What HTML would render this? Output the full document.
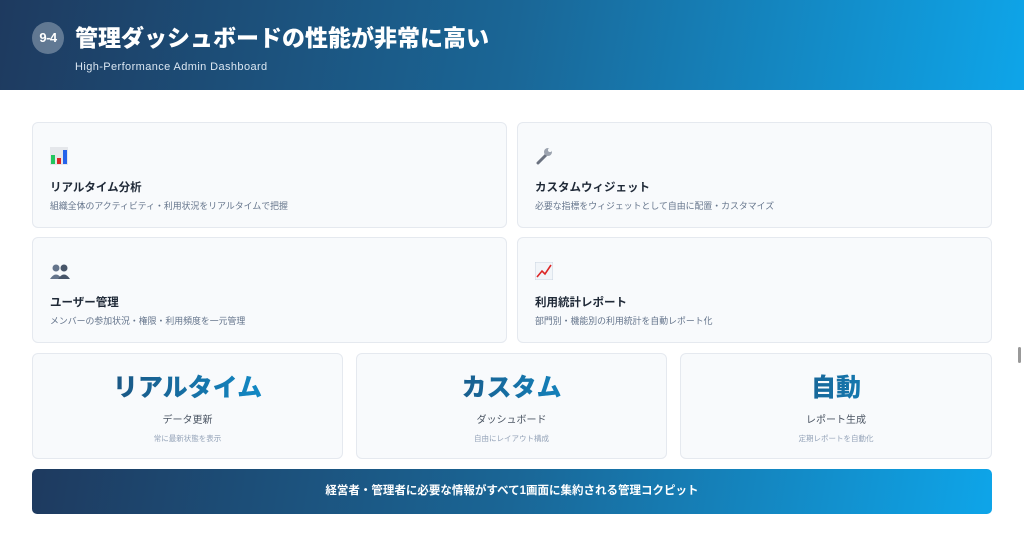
<!DOCTYPE html>
<html><head><meta charset="utf-8"><style>
*{margin:0;padding:0;box-sizing:border-box}
body{width:1024px;height:537px;overflow:hidden;background:#fff;font-family:"Liberation Sans","Noto Sans CJK JP",sans-serif;position:relative}
.hd{position:absolute;left:0;top:0;width:1024px;height:90px;background:linear-gradient(100deg,#1e3a5f 0%,#1a6696 50%,#0ea5e9 100%)}
.badge{position:absolute;left:32px;top:22px;width:32px;height:32px;border-radius:50%;background:rgba(255,255,255,.3);color:#fff;font-weight:700;font-size:13px;line-height:32px;text-align:center;letter-spacing:-.5px}
.title{position:absolute;left:75px;top:19px;color:#fff;font-size:23px;font-weight:900;white-space:nowrap}
.sub{position:absolute;left:75px;top:61px;color:#dbe7f2;font-size:11px;letter-spacing:.4px}
.card{position:absolute;background:#f8fafc;border:1px solid #e5e9ef;border-radius:6px}
.card svg{position:absolute;left:17px;top:24px}
.card h3{position:absolute;left:17px;top:56px;font-size:11.5px;font-weight:700;color:#1f2937;white-space:nowrap}
.card p{position:absolute;left:17px;top:76px;font-size:8.9px;color:#64748b;white-space:nowrap}
.st{position:absolute;background:#f8fafc;border:1px solid #e5e9ef;border-radius:6px;text-align:center}
.big{margin-top:18px;font-size:25px;font-weight:900;line-height:32px;background:linear-gradient(90deg,#1e3a5f,#0ea5e9);-webkit-background-clip:text;background-clip:text;color:transparent}
.l1{margin-top:7px;font-size:10px;color:#4b5563}
.l2{margin-top:7px;font-size:7.5px;color:#94a3b8}
.ban{position:absolute;left:32px;top:469px;width:960px;height:45px;border-radius:5px;background:linear-gradient(100deg,#1e3a5f,#1a6696 50%,#0ea5e9);color:#fff;font-size:11.5px;font-weight:700;text-align:center;line-height:45px}
.sb{position:absolute;left:1018px;top:347px;width:3px;height:16px;background:#999;border-radius:2px}
</style></head><body>
<div class="hd">
<div class="badge">9-4</div>
<div class="title">管理ダッシュボードの性能が非常に高い</div>
<div class="sub">High-Performance Admin Dashboard</div>
</div>
<div class="card" style="left:32px;top:122px;width:475px;height:106px">
<svg width="18" height="18" viewBox="0 0 18 18"><rect width="18" height="18" fill="#e5e7eb"/><rect x="1" y="8" width="4" height="9" fill="#22c55e"/><rect x="7" y="11" width="4" height="6" fill="#dc2626"/><rect x="13" y="3" width="4" height="14" fill="#2563eb"/></svg>
<h3>リアルタイム分析</h3><p>組織全体のアクティビティ・利用状況をリアルタイムで把握</p></div>
<div class="card" style="left:517px;top:122px;width:475px;height:106px">
<svg width="18" height="18" viewBox="0 0 18 18"><path d="M3 16 L11 8" stroke="#6b7280" stroke-width="3" stroke-linecap="round"/><circle cx="13" cy="5" r="4" fill="#9ca3af"/><circle cx="15" cy="3" r="2" fill="#f8fafc"/></svg>
<h3>カスタムウィジェット</h3><p>必要な指標をウィジェットとして自由に配置・カスタマイズ</p></div>
<div class="card" style="left:32px;top:237px;width:475px;height:106px">
<svg width="20" height="18" viewBox="0 0 20 18"><circle cx="6" cy="6" r="3.5" fill="#64748b"/><circle cx="14" cy="6" r="3.5" fill="#475569"/><path d="M0 17 Q6 8 12 17Z" fill="#64748b"/><path d="M8 17 Q14 8 20 17Z" fill="#475569"/></svg>
<h3>ユーザー管理</h3><p>メンバーの参加状況・権限・利用頻度を一元管理</p></div>
<div class="card" style="left:517px;top:237px;width:475px;height:106px">
<svg width="18" height="18" viewBox="0 0 18 18"><rect width="18" height="18" fill="#f1f5f9" stroke="#cbd5e1"/><path d="M2 15 L7 9 L10 12 L16 3" stroke="#dc2626" stroke-width="1.6" fill="none"/></svg>
<h3>利用統計レポート</h3><p>部門別・機能別の利用統計を自動レポート化</p></div>
<div class="st" style="left:32px;top:353px;width:311px;height:106px"><div class="big">リアルタイム</div><div class="l1">データ更新</div><div class="l2">常に最新状態を表示</div></div>
<div class="st" style="left:356px;top:353px;width:311px;height:106px"><div class="big">カスタム</div><div class="l1">ダッシュボード</div><div class="l2">自由にレイアウト構成</div></div>
<div class="st" style="left:680px;top:353px;width:312px;height:106px"><div class="big">自動</div><div class="l1">レポート生成</div><div class="l2">定期レポートを自動化</div></div>
<div class="ban">経営者・管理者に必要な情報がすべて1画面に集約される管理コクピット</div>
<div class="sb"></div>
</body></html>
